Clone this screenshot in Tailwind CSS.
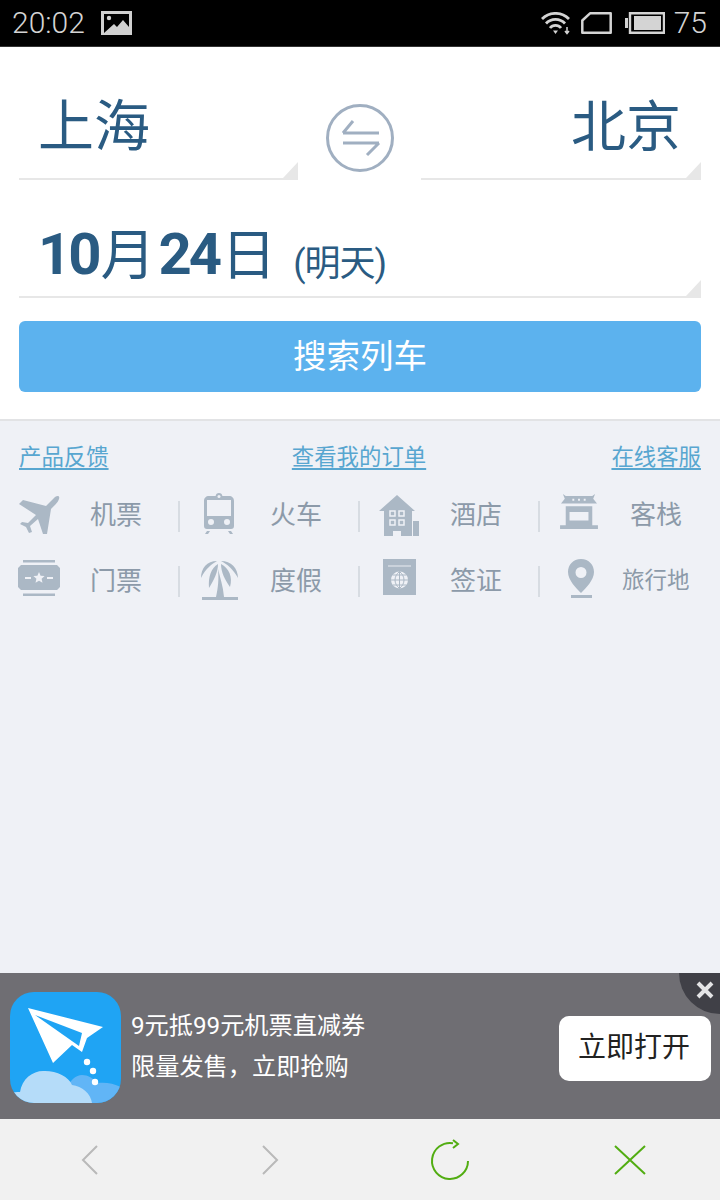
<!doctype html>
<html lang="zh-CN"><head><meta charset="utf-8"><script src="https://cdn.jsdelivr.net/npm/@tailwindcss/browser@4"></script></head>
<body class="m-0">
<div class="w-[720px] h-[1200px] flex flex-col overflow-hidden bg-[#eff1f6] font-['Roboto','Noto_Sans_CJK_SC',sans-serif]">
  <!-- status bar -->
  <div class="h-[47px] bg-black flex items-center justify-between pl-[12px] pr-[13px] text-[#d4d4d4] text-[30px] font-light border-b border-[#333] shrink-0">
    <div class="flex items-center gap-[16px]">
      <span class="leading-none">20:02</span>
      <svg width="31" height="24" viewBox="0 0 31 24"><path fill="#d0d0d0" d="M0 0h31v24H0z"/><path fill="#000" d="M3 3h25v13l-6-7-6 7-3-3-10 9H3z"/><circle cx="8" cy="7" r="2.200" fill="#d0d0d0"/></svg>
    </div>
    <div class="flex items-center">
      <svg width="30" height="23" viewBox="0 0 30 23" class="mr-[10px]"><path d="M1 7a19 19 0 0 1 27 0M5 11.500a13 13 0 0 1 19 0M9 16a7 7 0 0 1 11 0" fill="none" stroke="#d4d4d4" stroke-width="2.800"/><path d="M12 18.500h5L14.500 22z" fill="#d4d4d4"/><path d="M26 15v6m-2-2 2 2.500 2-2.500" stroke="#d4d4d4" stroke-width="1.500" fill="none"/></svg>
      <svg width="31" height="22" viewBox="0 0 31 22" class="mr-[13px]"><path d="M9 1.300h20.700v19.400H1.300V8.500z" fill="none" stroke="#d4d4d4" stroke-width="2.500" stroke-linejoin="round"/></svg>
      <svg width="40" height="22" viewBox="0 0 40 22" class="mr-[9px]"><path d="M5 1.200h34v19.600H5z" fill="none" stroke="#d4d4d4" stroke-width="2.400"/><path d="M9 4h27v14H9z" fill="#d4d4d4"/><path d="M0 6h3v10H0z" fill="#d4d4d4"/></svg>
      <span class="leading-none">75</span>
    </div>
  </div>

  <!-- form -->
  <div class="h-[374px] bg-white border-b-2 border-[#e2e3e5] shrink-0 px-[19px] flex flex-col">
    <div class="flex items-start justify-between h-[133px] pt-[30px]">
      <div class="relative w-[279px] h-[103px] border-b-2 border-[#e7e7e7] pl-[19px] text-[#2a5b82] text-[56px] leading-[100px]">上海
        <svg class="absolute right-0 bottom-0" width="15" height="16"><path d="M0 16 15 0v16z" fill="#e7e7e7"/></svg>
      </div>
      <svg width="70" height="70" viewBox="0 0 70 70" class="mt-[26px] shrink-0"><circle cx="35" cy="35" r="32.500" fill="#fff" stroke="#a0afc1" stroke-width="3"/><path d="M18 30h36M18 30 28 18M54 40H18M54 40 42 52" fill="none" stroke="#a0afc1" stroke-width="3"/></svg>
      <div class="relative w-[280px] h-[103px] border-b-2 border-[#e7e7e7] pr-[20px] text-right text-[#2a5b82] text-[55px] leading-[100px]">北京
        <svg class="absolute right-0 bottom-0" width="15" height="16"><path d="M0 16 15 0v16z" fill="#e7e7e7"/></svg>
      </div>
    </div>
    <div class="relative h-[118px] border-b-2 border-[#e7e7e7] pl-[19px] pt-[39px] flex items-baseline text-[#2a5b82] text-[55px] leading-[70px]">
      <span class="font-bold text-[58px] tracking-[-3px]">10</span><span class="ml-[2px]">月</span><span class="font-bold text-[58px] tracking-[-3px] ml-[3px]">24</span><span class="ml-[2px]">日</span><span class="text-[36px] ml-[17px] tracking-[-1px] translate-y-[2px]">(明天)</span>
      <svg class="absolute right-0 bottom-0" width="15" height="16"><path d="M0 16 15 0v16z" fill="#e7e7e7"/></svg>
    </div>
    <div class="mt-[23px] h-[71px] bg-[#5cb2ee] rounded-[6px] flex items-center justify-center text-white text-[33.500px] leading-none">搜索列车</div>
  </div>

  <!-- links -->
  <div class="flex justify-between px-[19px] pt-[21px] h-[62px] text-[22.400px] leading-[30px] text-[#58a6d0] underline underline-offset-[3px] shrink-0">
    <span>产品反馈</span><span class="mr-[2px]">查看我的订单</span><span>在线客服</span>
  </div>

  <!-- icon grid -->
  <div class="grid grid-cols-4 w-[720px] grid-rows-[65px_66px] text-[26px] text-[#8c9aa9]">
    <div class="flex items-center relative pl-[18px]">
      <svg width="42" height="42" viewBox="0 0 42 42" class="shrink-0"><path fill="#abb8c5" d="M37 2C40 0 42 1 41 4 40 7 38 9 33 14L29 39H25L20 24 12 31 14 37 11 38 8 32 2 29 4 27 10 28 18 20 1 9 5 5 28 11Z"/></svg>
      <span class="ml-[30px]">机票</span><i class="absolute right-0 top-[18px] h-[31px] w-[2px] bg-[#d7dce2]"></i>
    </div>
    <div class="flex items-center relative pl-[23px]">
      <svg width="32" height="42" viewBox="0 0 32 42" class="shrink-0 -mt-[4px]"><path fill="#abb8c5" fill-rule="evenodd" d="M16 0a3.500 3.500 0 0 1 3.400 3H26c3 0 5 2 5 5v25c0 2-1 3-3 3H4c-2 0-3-1-3-3V8c0-3 2-5 5-5h6.600A3.500 3.500 0 0 1 16 0zM4 7v16h24V7zm4 19a3 3 0 1 0 0 6 3 3 0 0 0 0-6zm16 0a3 3 0 1 0 0 6 3 3 0 0 0 0-6zM2 41l2-3h3l-2 3zm28 0-2-3h-3l2 3z"/><circle cx="16" cy="3.500" r="1.500" fill="#eff1f6"/></svg>
      <span class="ml-[35px]">火车</span><i class="absolute right-0 top-[18px] h-[31px] w-[2px] bg-[#d7dce2]"></i>
    </div>
    <div class="flex items-center relative pl-[19px]">
      <svg width="41" height="42" viewBox="0 0 41 42" class="shrink-0"><path fill="#abb8c5" d="M18 0 36 16h-3v25H5V16H0zM34 26h6v15h-6z"/><path fill="none" stroke="#eff1f6" stroke-width="1.500" d="M11 16h5v5h-5zM20 16h5v5h-5zM11 25h5v5h-5zM20 25h5v5h-5z"/><path fill="#eff1f6" d="M14 36h8v5h-8z"/></svg>
      <span class="ml-[30px]">酒店</span><i class="absolute right-0 top-[18px] h-[31px] w-[2px] bg-[#d7dce2]"></i>
    </div>
    <div class="flex items-center pl-[20px]">
      <svg width="38" height="36" viewBox="0 0 40 38" class="shrink-0 -mt-[8px] mr-[2px]"><path fill="#abb8c5" fill-rule="evenodd" d="M3 0l3 2h28l3-2-2 5 4 5H1l4-5zM6 13h28v20H6zm4 6v9h20v-9zM0 33h40v4H0z"/><path fill="#eff1f6" d="M13 5h2v2h-2zm6 0h2v2h-2zm6 0h2v2h-2z"/></svg>
      <span class="ml-[30px]">客栈</span>
    </div>
    <div class="flex items-center relative pl-[18px]">
      <svg width="42" height="36" viewBox="0 0 42 36" class="shrink-0 -mt-[6px]"><path fill="#abb8c5" d="M5 0h32v2.500H5zM5 33.500h32V36H5zM3 5h36l3 3v19l-3 3H3l-3-3V8z"/><path fill="#eff1f6" d="m21 12 1.600 3.700 4 .4-3 2.700.9 3.900-3.500-2-3.500 2 .9-3.900-3-2.700 4-.4zM7 17h6v2H7zM29 17h6v2h-6z"/></svg>
      <span class="ml-[30px]">门票</span><i class="absolute right-0 top-[18px] h-[31px] w-[2px] bg-[#d7dce2]"></i>
    </div>
    <div class="flex items-center relative pl-[20px]">
      <svg width="39" height="40" viewBox="0 0 39 40" class="shrink-0 -mt-[3px]"><path fill="#abb8c5" d="M1 18C1 8 7 1 17 1 12 4 6 8 1 18zM9 28C8 17 11 8 18 4 18 12 14 20 9 28zM30 27C33 17 29 8 21 4 21 12 25 20 30 27zM38 18C38 8 31 1 21 1 27 4 33 9 38 18zM18 9C20 17 23 26 24 37H16C18 28 19 20 18 9zM2 37h36v3H2z"/></svg>
      <span class="ml-[31px]">度假</span><i class="absolute right-0 top-[18px] h-[31px] w-[2px] bg-[#d7dce2]"></i>
    </div>
    <div class="flex items-center relative pl-[23px]">
      <svg width="33" height="36" viewBox="0 0 33 36" class="shrink-0 -mt-[8px]"><path fill="#abb8c5" d="M0 0h33v36H0z"/><path d="M5 7h23" stroke="#dfe4ea" stroke-width="1.200"/><circle cx="16.500" cy="21" r="8.500" fill="#eff1f6"/><path d="M8 21h17M16.500 12.500v17M10 16h13M10 26h13M16.500 12.500c-6 5-6 12 0 17M16.500 12.500c6 5 6 12 0 17" stroke="#abb8c5" fill="none" stroke-width="1"/></svg>
      <span class="ml-[34px]">签证</span><i class="absolute right-0 top-[18px] h-[31px] w-[2px] bg-[#d7dce2]"></i>
    </div>
    <div class="flex items-center pl-[27px]">
      <svg width="28" height="39" viewBox="0 0 28 39" class="shrink-0 -mt-[6px]"><path fill="#abb8c5" fill-rule="evenodd" d="M14 0c8 0 13 6 13 13 0 8-8 16-13 21C9 29 1 21 1 13 1 6 6 0 14 0zm0 8a5.500 5.500 0 1 0 0 11 5.500 5.500 0 0 0 0-11zM4 36h21v3H4z"/></svg>
      <span class="ml-[27px] text-[22.500px]">旅行地</span>
    </div>
  </div>
  <div class="flex-1"></div>

  <!-- ad -->
  <div class="relative h-[146px] bg-[#6f6e73] flex items-center pl-[10px] pr-[9px] shrink-0 overflow-hidden">
    <svg width="111" height="111" viewBox="0 0 111 111" class="shrink-0 rounded-[24px] mt-[3px]"><path fill="#1fa4f4" d="M0 0h111v111H0z"/><path fill="#61b5f6" d="M58 111V95c2-7 8-12 14-12 6 0 11 3 15 8 8-1 16 0 24 4v16z"/><path fill="#b5dcf9" d="M0 111v-9c3-2 7-2 10-2 2-14 14-22 25-21 12 0 24 6 27 14 10 1 19 9 20 18z"/><path fill="#fff" d="M18 16 93 35 77 46 72 60 62 53 43 71z"/><path fill="#1fa4f4" d="m25 23 47 18-3 13z"/><circle cx="77" cy="70" r="3.200" fill="#fff"/><circle cx="83" cy="79" r="3.200" fill="#fff"/><circle cx="85" cy="90" r="3.200" fill="#fff"/></svg>
    <div class="ml-[10px] flex flex-col gap-[11px] text-white text-[24.200px] leading-[30px] flex-1">
      <div>9元抵99元机票直减券</div>
      <div>限量发售，立即抢购</div>
    </div>
    <div class="w-[152px] h-[65px] bg-white rounded-[10px] flex items-center justify-center text-[#222] text-[28px] mt-[4px] pr-[2px]">立即打开</div>
    <div class="absolute right-[-41px] top-[-41px] w-[82px] h-[82px] rounded-full bg-[#404047]"></div>
    <svg class="absolute right-[6px] top-[8px]" width="18" height="18" viewBox="0 0 18 18"><path d="M2 2l14 14M16 2 2 16" stroke="#e4e4e6" stroke-width="4"/></svg>
  </div>

  <!-- browser bar -->
  <div class="h-[81px] bg-[#f1f1f1] grid grid-cols-4 shrink-0">
    <div class="flex items-center justify-center"><svg width="20" height="32" viewBox="0 0 20 32"><path d="M17 2 3 16l14 14" fill="none" stroke="#b9b9b9" stroke-width="2"/></svg></div>
    <div class="flex items-center justify-center"><svg width="20" height="32" viewBox="0 0 20 32"><path d="m3 2 14 14L3 30" fill="none" stroke="#b9b9b9" stroke-width="2"/></svg></div>
    <div class="flex items-center justify-center"><svg width="40" height="42" viewBox="0 0 40 42"><path d="M38 22a18 18 0 1 1-15-17.800" fill="none" stroke="#52ad12" stroke-width="2"/><path d="M23 1l5 4-5 4" fill="none" stroke="#52ad12" stroke-width="2"/></svg></div>
    <div class="flex items-center justify-center"><svg width="34" height="32" viewBox="0 0 34 32"><path d="M2 2l30 28M32 2 2 30" fill="none" stroke="#52ad12" stroke-width="2"/></svg></div>
  </div>
</div>
</body></html>
